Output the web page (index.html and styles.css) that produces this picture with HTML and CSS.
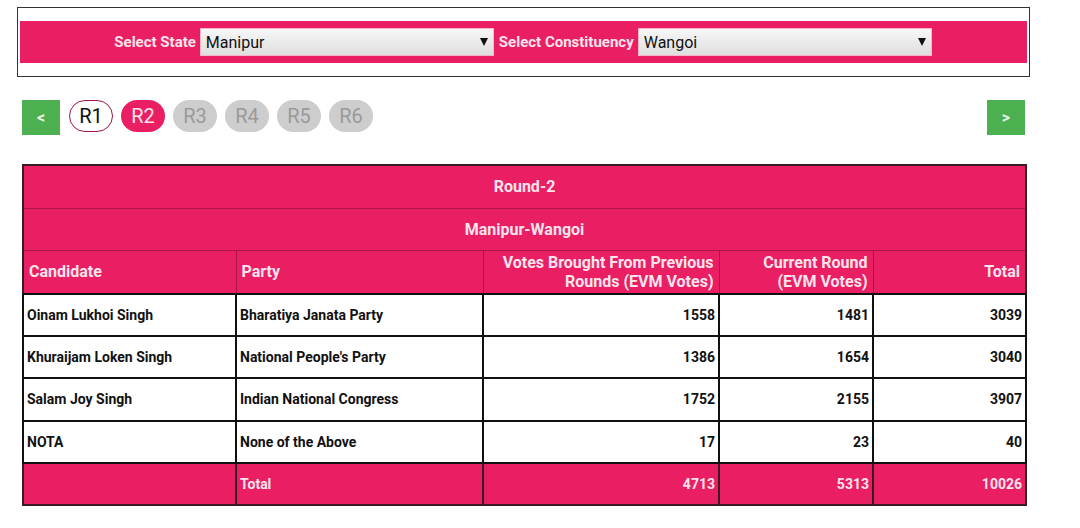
FILE: index.html
```html
<!DOCTYPE html>
<html lang="en">
<head>
    <meta charset="UTF-8">
    <meta name="viewport" content="width=device-width, initial-scale=1.0">
    <title>Round Wise Result</title>
    <link rel="stylesheet" href="styles.css">
</head>
<body>

    <div class="filtro-box">
        <div class="filtro-bar">
            <label for="estado">Select State</label>
            <div class="select-wrap">
                <select id="estado" name="estado">
                    <option>Manipur</option>
                </select>
            </div>
            <label for="constituency">Select Constituency</label>
            <div class="select-wrap">
                <select id="constituency" name="constituency">
                    <option>Wangoi</option>
                </select>
            </div>
        </div>
    </div>

    <div class="rondas">
        <button class="nav-btn">&lt;</button>
        <div class="pills">
            <span class="pill visto">R1</span>
            <span class="pill activo">R2</span>
            <span class="pill">R3</span>
            <span class="pill">R4</span>
            <span class="pill">R5</span>
            <span class="pill">R6</span>
        </div>
        <button class="nav-btn">&gt;</button>
    </div>

    <table class="resultado">
        <colgroup>
            <col class="c1"><col class="c2"><col class="c3"><col class="c4"><col class="c5">
        </colgroup>
        <thead>
            <tr><th colspan="5" class="centro">Round-2</th></tr>
            <tr><th colspan="5" class="centro">Manipur-Wangoi</th></tr>
            <tr>
                <th>Candidate</th>
                <th>Party</th>
                <th class="num">Votes Brought From Previous Rounds (EVM Votes)</th>
                <th class="num">Current Round<br>(EVM Votes)</th>
                <th class="num">Total</th>
            </tr>
        </thead>
        <tbody>
            <tr><td>Oinam Lukhoi Singh</td><td>Bharatiya Janata Party</td><td class="num">1558</td><td class="num">1481</td><td class="num">3039</td></tr>
            <tr><td>Khuraijam Loken Singh</td><td>National People's Party</td><td class="num">1386</td><td class="num">1654</td><td class="num">3040</td></tr>
            <tr><td>Salam Joy Singh</td><td>Indian National Congress</td><td class="num">1752</td><td class="num">2155</td><td class="num">3907</td></tr>
            <tr><td>NOTA</td><td>None of the Above</td><td class="num">17</td><td class="num">23</td><td class="num">40</td></tr>
        </tbody>
        <tfoot>
            <tr><td></td><td>Total</td><td class="num">4713</td><td class="num">5313</td><td class="num">10026</td></tr>
        </tfoot>
    </table>

</body>
</html>
```

FILE: styles.css
```css
body {
    font-family: Roboto, "Liberation Sans", Arial, sans-serif;
    background-color: #fff;
    margin: 0;
    padding: 7px 0 0 0;
}

/* Filtro */
.filtro-box {
    margin-left: 17px;
    width: 1007px;
    border: 1px solid #333;
    padding: 13px 2px;
}

.filtro-bar {
    background-color: #e91e63;
    height: 42px;
    display: flex;
    justify-content: center;
    align-items: center;
    gap: 4px;
}

.filtro-bar label {
    color: #fce4ec;
    font-weight: bold;
    font-size: 15px;
}

.select-wrap {
    position: relative;
    width: 294px;
    height: 28px;
    margin-right: 1px;
}

.select-wrap select {
    appearance: none;
    -webkit-appearance: none;
    width: 100%;
    height: 100%;
    border: 1px solid #f4b6c8;
    border-radius: 0;
    padding: 0 5px;
    font-family: Roboto, "Liberation Sans", Arial, sans-serif;
    font-size: 16px;
    color: #111;
    background: linear-gradient(#f7f7f7, #dedede);
}

.select-wrap::after {
    content: "";
    position: absolute;
    right: 6px;
    top: 10px;
    border-left: 4px solid transparent;
    border-right: 4px solid transparent;
    border-top: 8px solid #111;
    pointer-events: none;
}

/* Rondas */
.rondas {
    margin: 23px 0 0 22px;
    width: 1003px;
    display: flex;
    align-items: flex-start;
}

.nav-btn {
    background-color: #4caf50;
    color: #e8f5e9;
    border: none;
    width: 38px;
    height: 35px;
    font-size: 16px;
    font-weight: bold;
    font-family: Roboto, "Liberation Sans", Arial, sans-serif;
    padding: 0;
}

.pills {
    flex: 1;
    display: flex;
    gap: 8px;
    margin-left: 9px;
}

.pill {
    width: 44px;
    height: 32px;
    box-sizing: border-box;
    border-radius: 16px;
    background-color: #cdcdcd;
    color: #9a9a9a;
    font-size: 20px;
    display: flex;
    justify-content: center;
    align-items: center;
}

.pill.visto {
    background-color: #fff;
    color: #111;
    border: 1px solid #a3153f;
}

.pill.activo {
    background-color: #e91e63;
    color: #fce4ec;
}

/* Tabla */
.resultado {
    margin: 29px 0 0 22px;
    width: 1003px;
    border-collapse: collapse;
    table-layout: fixed;
    border: 2px solid #3a1a25;
}

.c1 { width: 213px; }
.c2 { width: 247px; }
.c3 { width: 236px; }
.c4 { width: 154px; }
.c5 { width: 153px; }

.resultado th {
    background-color: #e91e63;
    color: #fce4ec;
    font-size: 16px;
    font-weight: bold;
    text-align: left;
    height: 41.5px;
    padding: 0 5px;
    line-height: 19px;
    border: 1px solid #a8164a;
}

.resultado th.centro {
    text-align: center;
}

.resultado td {
    height: 40.4px;
    padding: 0 3px 0 3px;
    font-size: 14px;
    font-weight: bold;
    color: #111;
    border: 2px solid #111;
}

.resultado .num {
    text-align: right;
}

.resultado tfoot td {
    background-color: #e91e63;
    color: #fce4ec;
    border: 2px solid #3a1a25;
}
```
